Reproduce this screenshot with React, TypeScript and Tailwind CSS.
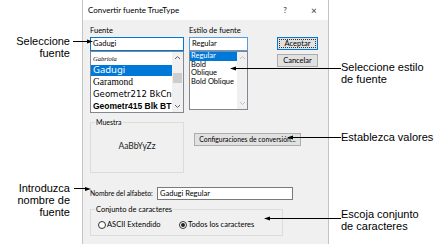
import React from "react";

const ui = { fontFamily: "Lato, 'Noto Sans', sans-serif" };
const ann = { fontFamily: "'Liberation Sans', Arial, sans-serif" };

function Chevron({ up, color = "#606060" }: { up?: boolean; color?: string }) {
  return (
    <svg width="7" height="5" viewBox="0 0 7 5">
      <polyline
        points={up ? "1,4 3.5,1.5 6,4" : "1,1 3.5,3.5 6,1"}
        fill="none"
        stroke={color}
        strokeWidth="1"
      />
    </svg>
  );
}

function Overlay() {
  return (
    <svg
      className="absolute top-0 left-0 pointer-events-none"
      width="440"
      height="244"
      viewBox="0 0 440 244"
    >
      <g stroke="#000" strokeWidth="1" fill="none">
        <line x1="73" y1="41.5" x2="89" y2="41.5" />
        <line x1="74" y1="188.5" x2="87" y2="188.5" />
        <line x1="234" y1="68.5" x2="341" y2="68.5" />
        <line x1="291" y1="137.5" x2="341" y2="137.5" />
        <line x1="268" y1="218.5" x2="341" y2="218.5" />
      </g>
      <g fill="#000">
        <polygon points="93,41.5 87,39.5 87,43.5" />
        <polygon points="91,189 85,187 85,191" />
        <polygon points="230,68.5 236,66.5 236,70.5" />
        <polygon points="287,137.5 293,135.5 293,139.5" />
        <polygon points="264,218.5 270,216.5 270,220.5" />
      </g>
    </svg>
  );
}

export default function App() {
  return (
    <div className="relative w-[440px] h-[244px] bg-white overflow-hidden flex text-black">
      {/* left callouts */}
      <div
        className="w-[82px] shrink-0 pr-[12px] text-right text-[11px] leading-[12px]"
        style={ann}
      >
        <div className="mt-[35px]">
          Seleccione
          <br />
          fuente
        </div>
        <div className="mt-[123px]">
          Introduzca
          <br />
          nombre de
          <br />
          fuente
        </div>
      </div>

      {/* dialog */}
      <div
        className="w-[247px] shrink-0 h-[244px] flex flex-col border-x border-[#c4c4c4] text-[7.5px] text-black"
        style={ui}
      >
        <div className="h-[20px] bg-white flex items-center">
          <div className="flex-1 pl-[5px] text-[8px]">Convertir fuente TrueType</div>
          <div className="w-[30px] text-center text-[8px] text-[#333]">?</div>
          <div className="w-[28px] text-center text-[10px] text-[#333] leading-[10px]">×</div>
        </div>
        <div className="flex-1 bg-[#f0f0f0] pl-[7px] pt-[6px] flex flex-col">
          {/* row 1 */}
          <div className="flex items-start">
            <div className="w-[94px] flex flex-col">
              <div className="h-[11px] leading-[9px]">Fuente</div>
              <div className="h-[14px] border border-[#0078d7] bg-white pl-[2px] flex items-center">
                Gadugi
              </div>
              <div className="h-[62px] border border-[#828790] bg-white flex">
                <div className="flex-1 flex flex-col overflow-hidden">
                  <div
                    className="h-[13px] flex items-center pl-[2px] text-[6.5px] italic"
                    style={{ fontFamily: "'Liberation Serif', serif" }}
                  >
                    Gabriola
                  </div>
                  <div
                    className="h-[11px] flex items-center pl-[2px] bg-[#0078d7] text-white text-[9.5px]"
                    style={{ fontFamily: "'Noto Sans', sans-serif" }}
                  >
                    Gadugi
                  </div>
                  <div
                    className="h-[12px] flex items-center pl-[2px] text-[9.5px]"
                    style={{ fontFamily: "'Liberation Serif', serif" }}
                  >
                    Garamond
                  </div>
                  <div
                    className="h-[12px] flex items-center pl-[2px] text-[9.5px] whitespace-nowrap"
                    style={{ fontFamily: "'Liberation Sans Narrow', 'DejaVu Sans Condensed', sans-serif" }}
                  >
                    Geometr212 BkCn
                  </div>
                  <div
                    className="h-[12px] flex items-center pl-[2px] text-[8.5px] font-bold whitespace-nowrap"
                    style={{ fontFamily: "'Liberation Sans', sans-serif" }}
                  >
                    Geometr415 Blk BT
                  </div>
                </div>
                <div className="w-[11px] bg-[#f0f0f0] flex flex-col">
                  <div className="h-[11px] flex items-center justify-center">
                    <Chevron up />
                  </div>
                  <div className="mt-[10px] h-[10px] mx-[1px] bg-[#cdcdcd]" />
                  <div className="flex-1" />
                  <div className="h-[11px] flex items-center justify-center">
                    <Chevron />
                  </div>
                </div>
              </div>
            </div>

            <div className="ml-[5px] w-[59px] flex flex-col">
              <div className="h-[11px] leading-[9px] whitespace-nowrap">Estilo de fuente</div>
              <div className="h-[14px] border border-[#5a9ad8] bg-white pl-[2px] flex items-center">
                Regular
              </div>
              <div className="h-[59px] border border-[#828790] bg-white flex">
                <div className="flex-1 flex flex-col text-black">
                  <div className="h-[8.7px] leading-[8.7px] pl-[1px] bg-[#0078d7] text-white">Regular</div>
                  <div className="h-[8.7px] leading-[8.7px] pl-[1px]">Bold</div>
                  <div className="h-[8.7px] leading-[8.7px] pl-[1px]">Oblique</div>
                  <div className="h-[8.7px] leading-[8.7px] pl-[1px] whitespace-nowrap">Bold Oblique</div>
                </div>
                <div className="w-[10px] bg-[#f0f0f0] flex flex-col">
                  <div className="h-[11px] flex items-center justify-center">
                    <Chevron up color="#bfbfbf" />
                  </div>
                  <div className="flex-1" />
                  <div className="h-[11px] flex items-center justify-center">
                    <Chevron color="#bfbfbf" />
                  </div>
                </div>
              </div>
            </div>

            <div className="ml-[29px] w-[41px] flex flex-col pt-[11px]">
              <div className="h-[13px] border border-[#0078d7] bg-[#e1e1e1] p-[1px] flex">
                <div className="flex-1 border border-dotted border-[#333] flex items-center justify-center leading-none">
                  Aceptar
                </div>
              </div>
              <div className="mt-[4px] h-[13px] border border-[#adadad] bg-[#e1e1e1] flex items-center justify-center">
                Cancelar
              </div>
            </div>
          </div>

          {/* row 2 */}
          <div className="flex items-start mt-[9px]">
            <div className="w-[94px] h-[51px] border border-[#dcdcdc] flex flex-col">
              <div className="-mt-[5px] ml-[4px] px-[1px] w-fit h-[9px] leading-[9px] bg-[#f0f0f0] text-[7px]">
                Muestra
              </div>
              <div className="mt-[14px] h-[10px] leading-[10px] text-center text-[8.5px] text-[#222]">
                AaBbYyZz
              </div>
            </div>
            <div className="ml-[10px] mt-[11px] w-[107px] h-[13px] border border-[#adadad] bg-[#e1e1e1] flex items-center justify-center whitespace-nowrap overflow-hidden text-[6.8px]">
              Configuraciones de conversión...
            </div>
          </div>

          {/* row 3 */}
          <div className="flex items-center mt-[14px]">
            <div className="w-[67px] whitespace-nowrap text-[6.8px]">Nombre del alfabeto:</div>
            <div className="w-[136px] h-[13px] border border-[#7a7a7a] bg-white pl-[2px] flex items-center">
              Gadugi Regular
            </div>
          </div>

          {/* row 4 */}
          <div className="mt-[9px] w-[193px] h-[27px] border border-[#dcdcdc] flex flex-col">
            <div className="-mt-[5px] ml-[4px] px-[1px] w-fit h-[9px] leading-[9px] bg-[#f0f0f0]">
              Conjunto de caracteres
            </div>
            <div className="mt-[6px] flex items-center h-[9px] pl-[7px]">
              <div className="w-[81px] flex items-center">
                <div className="w-[8px] h-[8px] rounded-full border border-[#333] bg-white" />
                <div className="ml-[1px]">ASCII Extendido</div>
              </div>
              <div className="flex items-center">
                <div className="w-[8px] h-[8px] rounded-full border border-[#333] bg-white flex items-center justify-center">
                  <div className="w-[4px] h-[4px] rounded-full bg-[#222]" />
                </div>
                <div className="ml-[1px]">Todos los caracteres</div>
              </div>
            </div>
          </div>
        </div>
      </div>

      {/* right callouts */}
      <div className="flex-1 pl-[12px] text-[11px] leading-[12px]" style={ann}>
        <div className="mt-[61px]">
          Seleccione estilo
          <br />
          de fuente
        </div>
        <div className="mt-[46px]">Establezca valores</div>
        <div className="mt-[65px]">
          Escoja conjunto
          <br />
          de caracteres
        </div>
      </div>

      <Overlay />
    </div>
  );
}
